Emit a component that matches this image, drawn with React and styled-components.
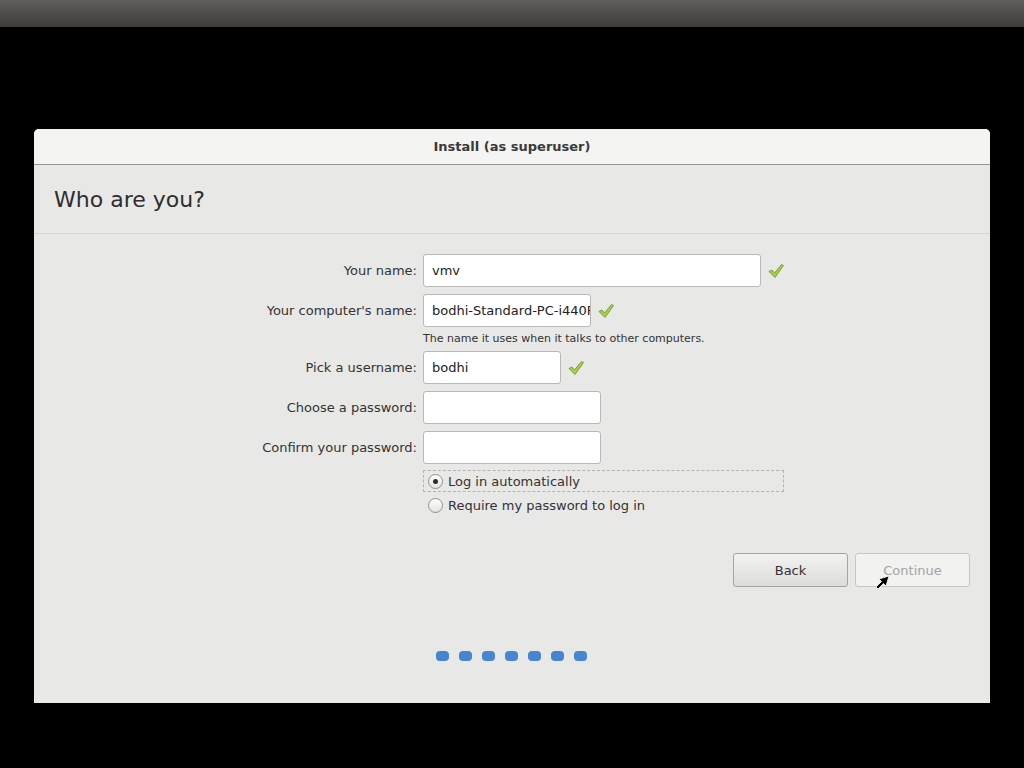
import styled, {createGlobalStyle} from 'styled-components';

const GlobalStyle = createGlobalStyle`
  html, body {
    margin: 0;
    padding: 0;
    background: #000;
  }
  body {
    font-family: "DejaVu Sans", "Liberation Sans", sans-serif;
    width: 1024px;
    height: 768px;
    overflow: hidden;
  }
`;

const Screen = styled.div`
  position: relative;
  width: 1024px;
  height: 768px;
  background: #000;
  display: flex;
  flex-direction: column;
`;

const TopPanel = styled.div`
  height: 27px;
  background: linear-gradient(#605e5b, #3d3c39);
  flex-shrink: 0;
`;

const Desktop = styled.div`
  flex: 1;
  padding: 102px 34px 0 34px;
`;

const Window = styled.div`
  width: 956px;
  height: 574px;
  display: flex;
  flex-direction: column;
  background: #e8e8e6;
  border-radius: 5px 5px 0 0;
  overflow: hidden;
`;

const TitleBar = styled.div`
  height: 35px;
  flex-shrink: 0;
  background: #f4f4f3;
  border-bottom: 1px solid #979795;
  display: flex;
  align-items: center;
  justify-content: center;
  font-size: 13px;
  font-weight: bold;
  color: #3a3a3a;
`;

const Header = styled.div`
  height: 68px;
  display: flex;
  align-items: center;
  padding-left: 20px;
  border-bottom: 1px solid #d2d2d0;
  font-size: 22px;
  color: #2e2e2e;
`;

const Body = styled.div`
  flex: 1;
  display: flex;
  flex-direction: column;
  padding-top: 20px;
`;

const Form = styled.div`
  display: grid;
  grid-template-columns: 383px 1fr;
  column-gap: 6px;
  row-gap: 7px;
  align-items: center;
`;

const Label = styled.div`
  text-align: right;
  font-size: 13px;
  color: #333;
`;

const FieldCell = styled.div`
  display: flex;
  align-items: center;
  gap: 6px;
`;

const Input = styled.div`
  box-sizing: border-box;
  width: ${p => p.$w}px;
  height: 33px;
  background: #fff;
  border: 1px solid #b9b9b7;
  border-radius: 3px;
  display: flex;
  align-items: center;
  padding-left: 8px;
  font-size: 13px;
  color: #222;
  overflow: hidden;
  white-space: nowrap;
`;

const Hint = styled.div`
  grid-column: 2;
  font-size: 11px;
  color: #333;
  margin-top: -2px;
  margin-bottom: -1px;
`;

const RadioGroup = styled.div`
  grid-column: 2;
  display: flex;
  flex-direction: column;
  gap: 2px;
  margin-top: -1px;
`;

const RadioRow = styled.div`
  box-sizing: border-box;
  width: 361px;
  height: 22px;
  display: flex;
  align-items: center;
  gap: 5px;
  padding-left: 4px;
  font-size: 13px;
  color: #333;
  border: 1px dashed ${p => (p.$focus ? '#b4b4b2' : 'transparent')};
`;

const RadioDot = styled.span`
  box-sizing: border-box;
  width: 15px;
  height: 15px;
  border-radius: 50%;
  border: 1px solid #8f8f8d;
  background: linear-gradient(#ffffff, #e4e4e2);
  display: flex;
  align-items: center;
  justify-content: center;

  &::after {
    content: '';
    width: 5px;
    height: 5px;
    border-radius: 50%;
    background: ${p => (p.$on ? '#2e2e2e' : 'transparent')};
  }
`;

const Buttons = styled.div`
  display: flex;
  justify-content: flex-end;
  gap: 7px;
  padding-right: 20px;
  margin-top: 37px;
  position: relative;
`;

const Button = styled.div`
  box-sizing: border-box;
  width: 115px;
  height: 34px;
  border-radius: 3px;
  display: flex;
  align-items: center;
  justify-content: center;
  font-size: 13px;
  color: ${p => (p.$disabled ? '#a3a3a3' : '#333')};
  border: 1px solid ${p => (p.$disabled ? '#c6c6c4' : '#a4a4a2')};
  background: ${p => (p.$disabled ? '#f2f2f1' : 'linear-gradient(#f2f2f1, #dcdcda)')};
`;

const Cursor = styled.svg`
  position: absolute;
  left: 841px;
  top: 22px;
`;

const Progress = styled.div`
  display: flex;
  gap: 10px;
  padding-left: 402px;
  margin-top: 64px;
`;

const Dot = styled.span`
  width: 13px;
  height: 10px;
  border-radius: 4px;
  background: #4686d0;
`;

const Check = () => (
  <svg width="18" height="18" viewBox="0 0 18 18">
    <path
      d="M2 9.5 L5 8 L7.5 11 L14.5 2.5 L16.5 3.5 L8 15.5 Z"
      fill="#a7cc52"
      stroke="#7ea032"
      strokeWidth="1"
      strokeLinejoin="round"
    />
  </svg>
);

export default function App() {
  return (
    <>
      <GlobalStyle/>
      <Screen>
        <TopPanel/>
        <Desktop>
          <Window>
            <TitleBar>Install (as superuser)</TitleBar>
            <Header>Who are you?</Header>
            <Body>
              <Form>
                <Label>Your name:</Label>
                <FieldCell>
                  <Input $w={338}>vmv</Input>
                  <Check/>
                </FieldCell>

                <Label>Your computer's name:</Label>
                <FieldCell>
                  <Input $w={168}>bodhi-Standard-PC-i440FX</Input>
                  <Check/>
                </FieldCell>
                <Hint>The name it uses when it talks to other computers.</Hint>

                <Label>Pick a username:</Label>
                <FieldCell>
                  <Input $w={138}>bodhi</Input>
                  <Check/>
                </FieldCell>

                <Label>Choose a password:</Label>
                <FieldCell>
                  <Input $w={178}/>
                </FieldCell>

                <Label>Confirm your password:</Label>
                <FieldCell>
                  <Input $w={178}/>
                </FieldCell>

                <RadioGroup>
                  <RadioRow $focus>
                    <RadioDot $on/>
                    Log in automatically
                  </RadioRow>
                  <RadioRow>
                    <RadioDot/>
                    Require my password to log in
                  </RadioRow>
                </RadioGroup>
              </Form>

              <Buttons>
                <Button>Back</Button>
                <Button $disabled>Continue</Button>
                <Cursor width="16" height="16" viewBox="0 0 16 16">
                  <path d="M14 1 L4 4 L6.5 6.5 L1 12 L3 14 L8.5 8.5 L11 11 Z" fill="#000" stroke="#fff" strokeWidth="0.8"/>
                </Cursor>
              </Buttons>

              <Progress>
                {[0, 1, 2, 3, 4, 5, 6].map(i => <Dot key={i}/>)}
              </Progress>
            </Body>
          </Window>
        </Desktop>
      </Screen>
    </>
  );
}
